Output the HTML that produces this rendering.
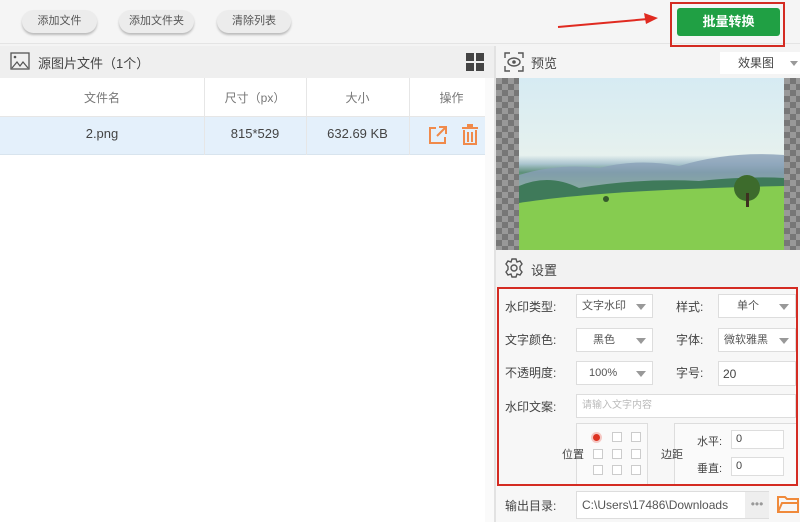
<!DOCTYPE html><html><head><meta charset="utf-8"><style>
*{box-sizing:border-box;margin:0;padding:0}
body{width:800px;height:522px;overflow:hidden;background:#f4f4f4;font-family:"Liberation Sans","Noto Sans CJK SC",sans-serif;font-size:12px;color:#444;position:relative}
.a{position:absolute}
.pill{position:absolute;top:10px;height:23px;border-radius:12px;background:#ececec;box-shadow:0 2px 2px #bbb;font-size:11px;line-height:23px;text-align:center;color:#555}
.sel{position:absolute;background:#fff;border:1px solid #ddd;height:24px;line-height:22px;font-size:11px;color:#555}
.sel:after{content:"";position:absolute;right:6px;top:9px;border:5px solid transparent;border-top:6px solid #999}
.lab{position:absolute;font-size:12px;color:#444}
.cb{position:absolute;width:10px;height:10px;border:1px solid #ccc;background:#fff}
</style></head><body>
<div class="a" style="left:0;top:0;width:800px;height:44px;background:#f5f5f5;border-bottom:1px solid #e4e4e4"></div>
<div class="pill" style="left:22px;width:75px">添加文件</div>
<div class="pill" style="left:119px;width:75px">添加文件夹</div>
<div class="pill" style="left:217px;width:74px">清除列表</div>
<div class="a" style="left:670px;top:2px;width:115px;height:45px;border:2px solid #d42b22"></div>
<div class="a" style="left:677px;top:8px;width:103px;height:28px;background:#20a044;border-radius:3px;color:#fff;font-size:13px;font-weight:bold;line-height:28px;text-align:center">批量转换</div>
<svg class="a" style="left:0;top:0" width="800" height="522">
<line x1="558" y1="27" x2="648" y2="19" stroke="#e02a20" stroke-width="2"/><polygon points="658,18 644,13 646,24" fill="#e02a20"/>
<line x1="380" y1="380" x2="466" y2="379" stroke="#e02a20" stroke-width="2"/><polygon points="478,379 464,373 464,385" fill="#e02a20"/>
</svg>
<div class="a" style="left:0;top:46px;width:494px;height:32px;background:#efefef"></div>
<svg class="a" style="left:10px;top:52px" width="20" height="18"><rect x="1" y="1" width="18" height="16" fill="none" stroke="#555" stroke-width="1.3"/><circle cx="5" cy="5" r="1.3" fill="#555"/><path d="M2 16 L7 10 L10 14 L13 10 L18 16" fill="none" stroke="#555" stroke-width="1.2"/></svg>
<div class="lab" style="left:38px;top:53px;font-size:13px">源图片文件（1个）</div>
<svg class="a" style="left:466px;top:53px" width="19" height="19"><rect x="0" y="0" width="8" height="8" fill="#444"/><rect x="10" y="0" width="8" height="8" fill="#444"/><rect x="0" y="10" width="8" height="8" fill="#444"/><rect x="10" y="10" width="8" height="8" fill="#444"/></svg>
<div class="a" style="left:0;top:78px;width:494px;height:444px;background:#fff"></div>
<div class="a" style="left:0;top:117px;width:494px;height:38px;background:#e4f0fb;border-bottom:1px solid #d8e4ee"></div>
<div class="a" style="left:204px;top:78px;width:1px;height:77px;background:#e6e6e6"></div>
<div class="a" style="left:306px;top:78px;width:1px;height:77px;background:#e6e6e6"></div>
<div class="a" style="left:409px;top:78px;width:1px;height:77px;background:#e6e6e6"></div>
<div class="a" style="left:0;top:116px;width:494px;height:1px;background:#e6e6e6"></div>
<div class="lab" style="left:0;width:204px;top:89px;text-align:center;color:#777">文件名</div>
<div class="lab" style="left:204px;width:102px;top:89px;text-align:center;color:#777">尺寸（px）</div>
<div class="lab" style="left:306px;width:103px;top:89px;text-align:center;color:#777">大小</div>
<div class="lab" style="left:409px;width:85px;top:89px;text-align:center;color:#777">操作</div>
<div class="lab" style="left:0;width:204px;top:126px;text-align:center;font-size:13px">2.png</div>
<div class="lab" style="left:204px;width:102px;top:126px;text-align:center;font-size:13px">815*529</div>
<div class="lab" style="left:306px;width:103px;top:126px;text-align:center;font-size:13px">632.69 KB</div>
<svg class="a" style="left:428px;top:125px" width="20" height="20"><path d="M8 3 H2 V18 H17 V12" fill="none" stroke="#f08a4b" stroke-width="2"/><path d="M9 11 L17 3 M11 2 H18 V9" fill="none" stroke="#f08a4b" stroke-width="2"/></svg>
<svg class="a" style="left:461px;top:124px" width="18" height="21"><rect x="1" y="3" width="16" height="2" fill="#f08a4b"/><rect x="6" y="0" width="6" height="3" fill="#f08a4b"/><path d="M3 6 V20 H15 V6" fill="none" stroke="#f08a4b" stroke-width="2"/><path d="M7 8 V18 M11 8 V18" stroke="#f08a4b" stroke-width="2"/></svg>
<div class="a" style="left:494px;top:46px;width:2px;height:476px;background:#e2e2e2"></div>
<div class="a" style="left:485px;top:78px;width:9px;height:444px;background:#fafafa"></div>
<svg class="a" style="left:504px;top:52px" width="20" height="20"><path d="M1 6 V1 H6 M14 1 H19 V6 M19 14 V19 H14 M6 19 H1 V14" fill="none" stroke="#555" stroke-width="1.4"/><ellipse cx="10" cy="10" rx="6" ry="4" fill="none" stroke="#555" stroke-width="1.4"/><circle cx="10" cy="10" r="1.8" fill="#555"/></svg>
<div class="lab" style="left:531px;top:53px;font-size:13px">预览</div>
<div class="a" style="left:720px;top:52px;width:80px;height:22px;background:#fff;font-size:12px;line-height:22px;padding-left:18px">效果图</div>
<div class="a" style="left:790px;top:61px;border:4px solid transparent;border-top:5px solid #999"></div>
<div class="a" style="left:496px;top:78px;width:304px;height:172px;background-color:#999;background-image:linear-gradient(45deg,#777 25%,transparent 25%,transparent 75%,#777 75%),linear-gradient(45deg,#777 25%,transparent 25%,transparent 75%,#777 75%);background-size:12px 12px;background-position:0 0,6px 6px"></div>
<div class="a" style="left:519px;top:78px;width:265px;height:172px;background:linear-gradient(#d6ebf3 0%,#e6f1ee 45%,#aac4cf 50%,#5d8f7a 55%,#7dc25a 62%,#8fd052 80%,#82c64c 100%)"></div>
<svg class="a" style="left:519px;top:78px" width="265" height="172"><path d="M0 97 Q40 85 80 90 Q120 80 160 88 Q210 73 265 77 V110 H0Z" fill="#8aa0b8" opacity=".8"/><path d="M0 108 Q30 95 60 110 Q120 100 180 103 Q230 98 265 100 V125 H0Z" fill="#3f7a5a"/><path d="M0 125 Q80 112 265 108 V172 H0Z" fill="#86cc50"/><circle cx="228" cy="110" r="13" fill="#3d6b2c"/><rect x="227" y="115" width="3" height="14" fill="#3d3020"/><circle cx="87" cy="121" r="3" fill="#355a2c"/></svg>
<div class="a" style="left:496px;top:250px;width:304px;height:37px;background:#f2f2f2"></div>
<svg class="a" style="left:504px;top:258px" width="20" height="20"><circle cx="10" cy="10" r="3" fill="none" stroke="#555" stroke-width="1.4"/><path d="M8 1 H12 L13 4 L16 3 L18 6 L16 8.5 V11.5 L18 14 L16 17 L13 16 L12 19 H8 L7 16 L4 17 L2 14 L4 11.5 V8.5 L2 6 L4 3 L7 4Z" fill="none" stroke="#555" stroke-width="1.4"/></svg>
<div class="lab" style="left:531px;top:260px;font-size:13px">设置</div>
<div class="a" style="left:496px;top:287px;width:304px;height:235px;background:#f7f7f7"></div>
<div class="lab" style="left:505px;top:298px">水印类型:</div>
<div class="sel" style="left:576px;top:294px;width:77px;padding-left:5px">文字水印</div>
<div class="lab" style="left:676px;top:298px">样式:</div>
<div class="sel" style="left:718px;top:294px;width:78px;padding-left:18px">单个</div>
<div class="lab" style="left:505px;top:331px">文字颜色:</div>
<div class="sel" style="left:576px;top:328px;width:77px;padding-left:16px">黑色</div>
<div class="lab" style="left:676px;top:331px">字体:</div>
<div class="sel" style="left:718px;top:328px;width:78px;padding-left:5px">微软雅黑</div>
<div class="lab" style="left:505px;top:364px">不透明度:</div>
<div class="sel" style="left:576px;top:361px;width:77px;padding-left:12px">100%</div>
<div class="lab" style="left:676px;top:364px">字号:</div>
<div class="a" style="left:718px;top:361px;width:78px;height:25px;background:#fff;border:1px solid #ddd;font-size:12px;line-height:25px;padding-left:4px">20</div>
<div class="lab" style="left:505px;top:398px">水印文案:</div>
<div class="a" style="left:576px;top:394px;width:220px;height:24px;background:#fff;border:1px solid #ddd;font-size:10px;color:#bbb;line-height:22px;padding-left:5px">请输入文字内容</div>
<div class="a" style="left:576px;top:423px;width:72px;height:62px;border:1px solid #ddd;background:#fafafa"></div>
<div class="lab" style="left:562px;top:446px;font-size:11px">位置</div>
<div class="a" style="left:593px;top:434px;width:7px;height:7px;border-radius:50%;background:#d32;box-shadow:0 0 0 2px #f5c8c4"></div>
<div class="cb" style="left:612px;top:432px"></div><div class="cb" style="left:631px;top:432px"></div>
<div class="cb" style="left:593px;top:449px"></div><div class="cb" style="left:612px;top:449px"></div><div class="cb" style="left:631px;top:449px"></div>
<div class="cb" style="left:593px;top:465px"></div><div class="cb" style="left:612px;top:465px"></div><div class="cb" style="left:631px;top:465px"></div>
<div class="a" style="left:674px;top:423px;width:124px;height:62px;border:1px solid #ddd;border-right:none;background:#fafafa"></div>
<div class="lab" style="left:661px;top:446px;font-size:11px">边距</div>
<div class="lab" style="left:697px;top:433px;font-size:11px">水平:</div>
<div class="a" style="left:731px;top:430px;width:53px;height:19px;background:#fff;border:1px solid #ddd;font-size:11px;line-height:17px;padding-left:4px">0</div>
<div class="lab" style="left:697px;top:460px;font-size:11px">垂直:</div>
<div class="a" style="left:731px;top:457px;width:53px;height:19px;background:#fff;border:1px solid #ddd;font-size:11px;line-height:17px;padding-left:4px">0</div>
<div class="a" style="left:497px;top:287px;width:301px;height:199px;border:2px solid #d42b22"></div>
<div class="lab" style="left:505px;top:497px">输出目录:</div>
<div class="a" style="left:576px;top:491px;width:193px;height:28px;background:#fff;border:1px solid #ddd;font-size:12px;line-height:26px;padding-left:5px;color:#555">C:\Users\17486\Downloads</div>
<div class="a" style="left:745px;top:492px;width:24px;height:26px;background:#eee;color:#999;text-align:center;line-height:24px">•••</div>
<svg class="a" style="left:777px;top:494px" width="23" height="20"><path d="M1 3 H8 L10 5 H21 V18 H1Z" fill="none" stroke="#f08a3b" stroke-width="2"/><path d="M1 18 L5 9 H22" fill="none" stroke="#f08a3b" stroke-width="2"/></svg>
</body></html>
